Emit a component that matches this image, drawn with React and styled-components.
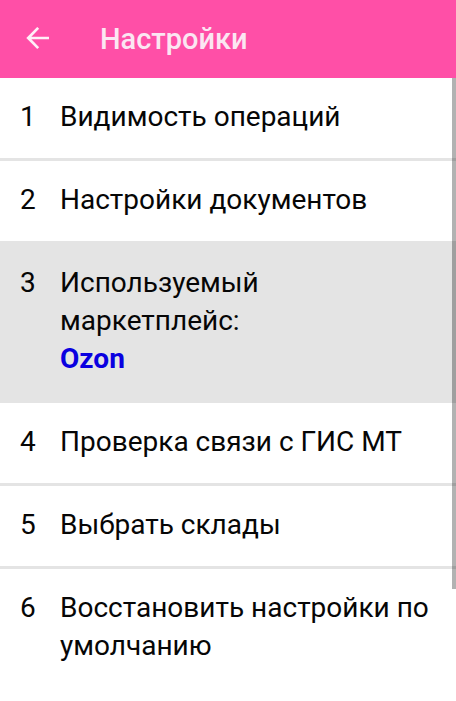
import React from 'react'
import styled, { createGlobalStyle } from 'styled-components'

const items = [
    { id: 1, title: 'Видимость операций' },
    { id: 2, title: 'Настройки документов' },
    { id: 3, title: 'Используемый маркетплейс:', value: 'Ozon', active: true },
    { id: 4, title: 'Проверка связи с ГИС МТ' },
    { id: 5, title: 'Выбрать склады' },
    { id: 6, title: 'Восстановить настройки по умолчанию' },
]

const App = () => {
    return (
        <>
            <GlobalStyle />
            <Page>
                <Header>
                    <BackButton type="button" aria-label="Назад">
                        <svg width="24" height="24" viewBox="0 0 24 24" fill="none" stroke="currentColor" strokeWidth="2.7">
                            <path d="M24 11H3.2M13.2 0.9L3.2 11l10 10.1" />
                        </svg>
                    </BackButton>
                    <Title>Настройки</Title>
                </Header>
                <Content>
                    <List>
                        {items.map((item) => (
                            <Item key={item.id}>
                                <Row type="button" $active={item.active}>
                                    <Num>{item.id}</Num>
                                    <Label>
                                        {item.title}
                                        {item.value && <Value>{item.value}</Value>}
                                    </Label>
                                </Row>
                            </Item>
                        ))}
                    </List>
                    <ScrollThumb />
                </Content>
            </Page>
        </>
    )
}

const GlobalStyle = createGlobalStyle`
    * {
        box-sizing: border-box;
    }
    body {
        margin: 0;
        background: #fff;
        color: #060606;
        font-family: Roboto, "Noto Sans", sans-serif;
    }
`

const Page = styled.div`
    display: flex;
    flex-direction: column;
    min-height: 100vh;
`

const Header = styled.header`
    display: flex;
    align-items: center;
    gap: 51px;
    height: 78px;
    padding: 0 25px;
    background: #ff4fa7;
    color: #fbe6f2;
`

const BackButton = styled.button`
    display: flex;
    padding: 0;
    border: 0;
    background: none;
    color: #fff0f8;
    cursor: pointer;
`

const Title = styled.h1`
    margin: 0;
    font-size: 29px;
    line-height: 38px;
    font-weight: 500;
`

const Content = styled.main`
    position: relative;
    flex: 1;
`

const List = styled.ul`
    margin: 0;
    padding: 0;
    list-style: none;
`

const Item = styled.li`
    border-bottom: 3px solid #e4e4e4;

    &:last-child {
        border-bottom: 0;
    }
`

const Row = styled.button`
    display: flex;
    align-items: flex-start;
    gap: 20px;
    width: 100%;
    padding: 20px 16px 22px 20px;
    border: 0;
    background: ${(props) => (props.$active ? '#e4e4e4' : '#fff')};
    color: inherit;
    font: inherit;
    font-size: 28px;
    line-height: 38px;
    text-align: left;
    cursor: pointer;
`

const Num = styled.span`
    flex: 0 0 20px;
`

const Label = styled.span`
    flex: 1;
`

const Value = styled.strong`
    display: block;
    color: #0a00e0;
    font-weight: 700;
`

// scroll indicator drawn over the right edge of the list
const ScrollThumb = styled.div`
    position: absolute;
    top: 0;
    right: 0;
    width: 4px;
    height: 82%;
    background: rgba(0, 0, 0, 0.3);
`

export default App
